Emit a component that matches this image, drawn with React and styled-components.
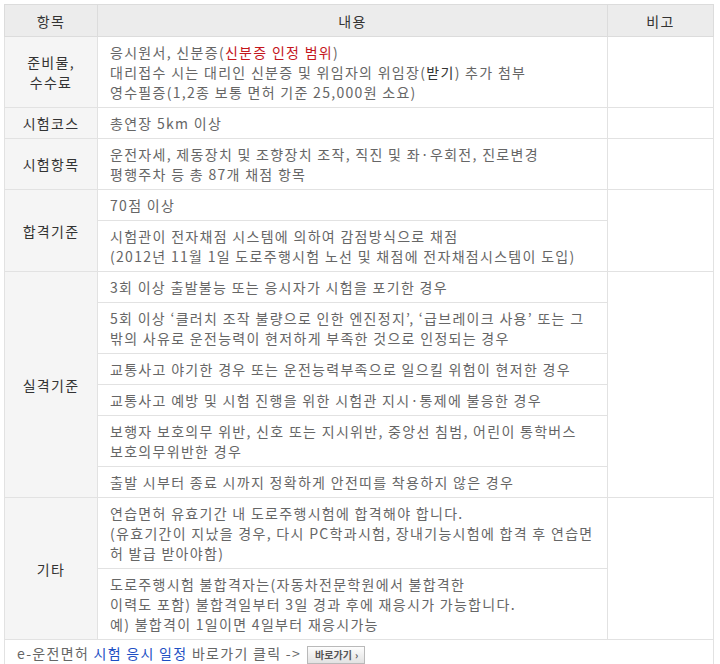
import React from 'react'
import styled, { createGlobalStyle } from 'styled-components'

const GlobalStyle = createGlobalStyle`
    body {
        margin: 0;
        background: #fff;
        font-family: "Noto Sans CJK KR", "Noto Sans", sans-serif;
    }
`
const Wrap = styled.div`
    padding: 4px 6px 0 4px;
`
const Table = styled.table`
    width: 710px;
    border-collapse: collapse;
    table-layout: fixed;
    font-size: 14px;
    letter-spacing: 1.3px;
    border: 1px solid #d6d6d6;
`
const Th = styled.th`
    background: #ececec;
    color: #333;
    font-weight: normal;
    height: 31px;
    padding: 0;
    border: 1px solid #dcdcdc;
    text-align: center;
`
const Label = styled.td`
    background: #f5f5f5;
    color: #333;
    text-align: center;
    line-height: 20px;
    border: 1px solid #e2e2e2;
    padding: 5px 2px;
`
const Content = styled.td`
    color: #666;
    line-height: 20px;
    padding: 5px 12px;
    border: 1px solid #e2e2e2;
`
const Note = styled.td`
    border: 1px solid #e2e2e2;
`
const Footer = styled.td`
    color: #666;
    line-height: 20px;
    padding: 3px 12px 4px;
    border: 1px solid #e2e2e2;
    white-space: nowrap;
`
const Red = styled.span`
    color: #c4161c;
`
const Dark = styled.span`
    color: #333;
`
const Blue = styled.span`
    color: #1d4fc4;
`
const GoButton = styled.span`
    display: inline-flex;
    align-items: center;
    gap: 3px;
    height: 16px;
    padding: 0 6px 0 7px;
    margin-left: 6px;
    vertical-align: middle;
    border: 1px solid #b9b9b9;
    background: linear-gradient(#fdfdfd, #e2e2e2);
    color: #555;
    font-size: 10px;
    font-weight: bold;
    letter-spacing: 0;
    line-height: 16px;
`

const rules = [
    ['3회 이상 출발불능 또는 응시자가 시험을 포기한 경우'],
    ['5회 이상 ‘클러치 조작 불량으로 인한 엔진정지’, ‘급브레이크 사용’ 또는 그', '밖의 사유로 운전능력이 현저하게 부족한 것으로 인정되는 경우'],
    ['교통사고 야기한 경우 또는 운전능력부족으로 일으킬 위험이 현저한 경우'],
    ['교통사고 예방 및 시험 진행을 위한 시험관 지시·통제에 불응한 경우'],
    ['보행자 보호의무 위반, 신호 또는 지시위반, 중앙선 침범, 어린이 통학버스', '보호의무위반한 경우'],
    ['출발 시부터 종료 시까지 정확하게 안전띠를 착용하지 않은 경우'],
]

function Lines({ lines }) {
    return lines.map((l, i) => (
        <React.Fragment key={i}>
            {i > 0 && <br />}
            {l}
        </React.Fragment>
    ))
}

export default function App() {
    return (
        <Wrap>
            <GlobalStyle />
            <Table>
                <colgroup>
                    <col style={{ width: 93 }} />
                    <col style={{ width: 510 }} />
                    <col />
                </colgroup>
                <thead>
                    <tr>
                        <Th>항목</Th>
                        <Th>내용</Th>
                        <Th>비고</Th>
                    </tr>
                </thead>
                <tbody>
                    <tr>
                        <Label>준비물,<br />수수료</Label>
                        <Content>
                            응시원서, 신분증(<Red>신분증 인정 범위</Red>)<br />
                            대리접수 시는 대리인 신분증 및 위임자의 위임장(<Dark>받기</Dark>) 추가 첨부<br />
                            영수필증(1,2종 보통 면허 기준 25,000원 소요)
                        </Content>
                        <Note />
                    </tr>
                    <tr>
                        <Label>시험코스</Label>
                        <Content>총연장 5km 이상</Content>
                        <Note />
                    </tr>
                    <tr>
                        <Label>시험항목</Label>
                        <Content>
                            운전자세, 제동장치 및 조향장치 조작, 직진 및 좌·우회전, 진로변경<br />
                            평행주차 등 총 87개 채점 항목
                        </Content>
                        <Note />
                    </tr>
                    <tr>
                        <Label rowSpan={2}>합격기준</Label>
                        <Content>70점 이상</Content>
                        <Note rowSpan={2} />
                    </tr>
                    <tr>
                        <Content>
                            시험관이 전자채점 시스템에 의하여 감점방식으로 채점<br />
                            (2012년 11월 1일 도로주행시험 노선 및 채점에 전자채점시스템이 도입)
                        </Content>
                    </tr>
                    {rules.map((r, i) => (
                        <tr key={i}>
                            {i === 0 && <Label rowSpan={rules.length}>실격기준</Label>}
                            <Content><Lines lines={r} /></Content>
                            {i === 0 && <Note rowSpan={rules.length} />}
                        </tr>
                    ))}
                    <tr>
                        <Label rowSpan={2}>기타</Label>
                        <Content>
                            연습면허 유효기간 내 도로주행시험에 합격해야 합니다.<br />
                            (유효기간이 지났을 경우, 다시 PC학과시험, 장내기능시험에 합격 후 연습면<br />
                            허 발급 받아야함)
                        </Content>
                        <Note rowSpan={2} />
                    </tr>
                    <tr>
                        <Content>
                            도로주행시험 불합격자는(자동차전문학원에서 불합격한<br />
                            이력도 포함) 불합격일부터 3일 경과 후에 재응시가 가능합니다.<br />
                            예) 불합격이 1일이면 4일부터 재응시가능
                        </Content>
                    </tr>
                    <tr>
                        <Footer colSpan={3}>
                            e-운전면허 <Blue>시험 응시 일정</Blue> 바로가기 클릭 -&gt;
                            <GoButton>바로가기 <span>›</span></GoButton>
                        </Footer>
                    </tr>
                </tbody>
            </Table>
        </Wrap>
    )
}
